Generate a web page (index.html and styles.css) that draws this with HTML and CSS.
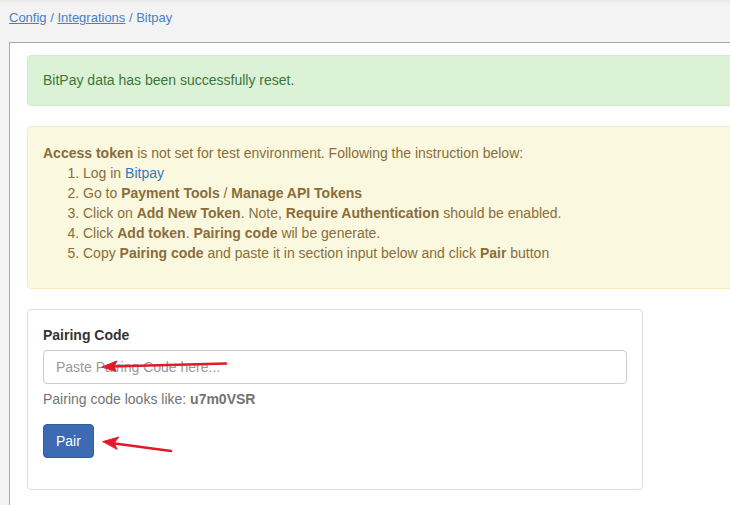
FILE: index.html
```html
<!DOCTYPE html>
<html>
<head>
<meta charset="utf-8">
<link rel="stylesheet" href="styles.css">
</head>
<body>
<div class="topshade"></div>
<div class="crumbs">
  <a href="#">Config</a> / <a href="#">Integrations</a> / Bitpay
</div>
<div class="page">
  <div class="alert alert-success">BitPay data has been successfully reset.</div>
  <div class="alert alert-warning">
    <div><b>Access token</b> is not set for test environment. Following the instruction below:</div>
    <ol>
      <li>Log in <a href="#" class="link">Bitpay</a></li>
      <li>Go to <b>Payment Tools</b> / <b>Manage API Tokens</b></li>
      <li>Click on <b>Add New Token</b>. Note, <b>Require Authentication</b> should be enabled.</li>
      <li>Click <b>Add token</b>. <b>Pairing code</b> wil be generate.</li>
      <li>Copy <b>Pairing code</b> and paste it in section input below and click <b>Pair</b> button</li>
    </ol>
  </div>
  <div class="card">
    <label class="label">Pairing Code</label>
    <input class="input" type="text" placeholder="Paste Pairing Code here...">
    <div class="help">Pairing code looks like: <b>u7m0VSR</b></div>
    <button class="btn">Pair</button>
  </div>
</div>
<svg class="arrows" width="730" height="505" viewBox="0 0 730 505">
  <g stroke="#e3192b" stroke-width="2.6" stroke-linecap="round" fill="#e3192b">
    <line x1="226" y1="363.5" x2="110" y2="366.5"/>
    <polygon points="102,367 117,361 114,366.5 116,371" stroke-width="1" stroke-linejoin="round"/>
    <line x1="171" y1="451" x2="111" y2="443"/>
    <polygon points="103,441.5 119,437 114,443 117,449" stroke-width="1" stroke-linejoin="round"/>
  </g>
</svg>
</body>
</html>
```
FILE: styles.css
```css
html, body {
  margin: 0;
  padding: 0;
}
body {
  width: 730px;
  height: 505px;
  overflow: hidden;
  background: #f3f3f3;
  font-family: "Liberation Sans", Arial, sans-serif;
  font-size: 14px;
  line-height: 20px;
  color: #333;
  position: relative;
}
.topshade {
  height: 4px;
  background: linear-gradient(#e6e6e6, #f3f3f3);
}
.crumbs {
  padding: 6px 0 0 9px;
  box-sizing: border-box;
  height: 38px;
  font-size: 13px;
  line-height: 16px;
  color: #4a7fc1;
}
.crumbs a {
  color: #4a7fc1;
  text-decoration: underline;
}
.page {
  margin-left: 9px;
  width: 721px;
  height: 470px;
  overflow: hidden;
  background: #fff;
  border-top: 1px solid #ababab;
  border-left: 1px solid #ababab;
  padding: 12px 0 0 17px;
  box-sizing: border-box;
}
.alert {
  padding: 15px;
  margin-bottom: 20px;
  margin-right: -20px;
  border: 1px solid transparent;
  border-radius: 4px;
}
.alert-success {
  background: #dbf2d6;
  border-color: #d3ebc8;
  color: #3c763d;
  padding-top: 14px;
  padding-bottom: 15px;
}
.alert-warning {
  background: #faf8df;
  border-color: #f6ebc3;
  color: #8a6d3b;
  padding-top: 16px;
  padding-bottom: 15px;
}
.alert-warning ol {
  margin: 0 0 10px 0;
  padding-left: 40px;
}
.link {
  color: #337ab7;
  text-decoration: none;
}
.card {
  width: 616px;
  box-sizing: border-box;
  border: 1px solid #ddd;
  border-radius: 4px;
  padding: 15px 15px 31px;
  display: flex;
  flex-direction: column;
  align-items: flex-start;
}
.label {
  font-weight: bold;
  margin-bottom: 5px;
}
.input {
  width: 100%;
  height: 34px;
  box-sizing: border-box;
  border: 1px solid #ccc;
  border-radius: 4px;
  padding: 6px 12px;
  font-family: inherit;
  font-size: 14px;
  color: #555;
}
.input::placeholder {
  color: #999;
}
.help {
  margin-top: 5px;
  margin-bottom: 15px;
  color: #737373;
}
.btn {
  height: 34px;
  padding: 6px 12px;
  font-family: inherit;
  font-size: 14px;
  line-height: 20px;
  color: #fff;
  background: #3d6bb3;
  border: 1px solid #2e5d9f;
  border-radius: 4px;
}
.arrows {
  position: absolute;
  left: 0;
  top: 0;
  pointer-events: none;
}
```
